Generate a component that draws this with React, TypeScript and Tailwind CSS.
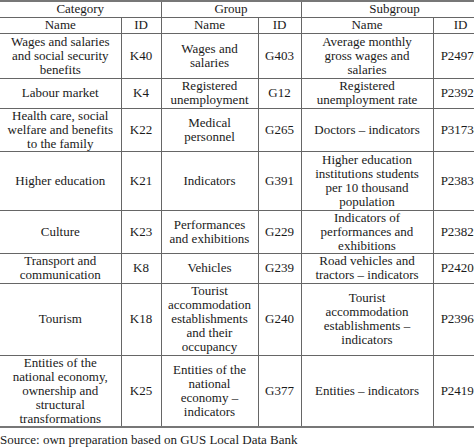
const rows = [
  { h: 'h-[45px]', c: 'Wages and salaries and social security benefits', k: 'K40', g: 'Wages and salaries', gid: 'G403', s: 'Average monthly gross wages and salaries', p: 'P24970' },
  { h: 'h-[30px]', c: 'Labour market', k: 'K4', g: 'Registered unemployment', gid: 'G12', s: 'Registered unemployment rate', p: 'P23921' },
  { h: 'h-[42px]', c: 'Health care, social welfare and benefits to the family', k: 'K22', g: 'Medical personnel', gid: 'G265', s: 'Doctors – indicators', p: 'P31734' },
  { h: 'h-[59px]', c: 'Higher education', k: 'K21', g: 'Indicators', gid: 'G391', s: 'Higher education institutions students per 10 thousand population', p: 'P23834' },
  { h: 'h-[42px]', c: 'Culture', k: 'K23', g: 'Performances and exhibitions', gid: 'G229', s: 'Indicators of performances and exhibitions', p: 'P23822' },
  { h: 'h-[30px]', c: 'Transport and communication', k: 'K8', g: 'Vehicles', gid: 'G239', s: 'Road vehicles and tractors – indicators', p: 'P24200' },
  { h: 'h-[72px]', c: 'Tourism', k: 'K18', g: 'Tourist accommodation establishments and their occupancy', gid: 'G240', s: 'Tourist accommodation establishments – indicators', p: 'P23964' },
  { h: 'h-[72px]', c: 'Entities of the national economy, ownership and structural transformations', k: 'K25', g: 'Entities of the national economy – indicators', gid: 'G377', s: 'Entities – indicators', p: 'P24195' },
]

const cell = 'border border-[#666] px-[6px] py-0 text-center align-middle'

export default function App() {
  return (
    <div className="h-[447px] w-[474px] overflow-hidden bg-white font-serif text-[#1a1a1a]">
      <table className="w-[488px] table-fixed border-collapse font-[Liberation_Serif,serif] text-[13px] leading-[14px]">
        <colgroup>
          <col className="w-[121px]" />
          <col className="w-[40px]" />
          <col className="w-[97px]" />
          <col className="w-[43px]" />
          <col className="w-[132px]" />
          <col className="w-[55px]" />
        </colgroup>
        <thead>
          <tr className="h-[16px] border-t-2 border-t-[#777]">
            <th colSpan={2} className={`${cell} border-l-0 font-normal`}>Category</th>
            <th colSpan={2} className={`${cell} font-normal`}>Group</th>
            <th colSpan={2} className={`${cell} font-normal`}>Subgroup</th>
          </tr>
          <tr className="h-[16px]">
            {['Name', 'ID', 'Name', 'ID', 'Name', 'ID'].map((t, i) => (
              <th key={i} className={`${cell} font-normal ${i === 0 ? 'border-l-0' : ''}`}>{t}</th>
            ))}
          </tr>
        </thead>
        <tbody>
          {rows.map((r, i) => (
            <tr key={r.k} className={`${r.h} ${i === rows.length - 1 ? 'border-b-2 border-b-[#777]' : ''}`}>
              <td className={`${cell} border-l-0`}>{r.c}</td>
              <td className={cell}>{r.k}</td>
              <td className={cell}>{r.g}</td>
              <td className={cell}>{r.gid}</td>
              <td className={cell}>{r.s}</td>
              <td className={cell}>{r.p}</td>
            </tr>
          ))}
        </tbody>
      </table>
      <p className="mt-[5px] font-[Liberation_Serif,serif] text-[13px] leading-[14.5px]">
        Source: own preparation based on GUS Local Data Bank
      </p>
    </div>
  )
}
